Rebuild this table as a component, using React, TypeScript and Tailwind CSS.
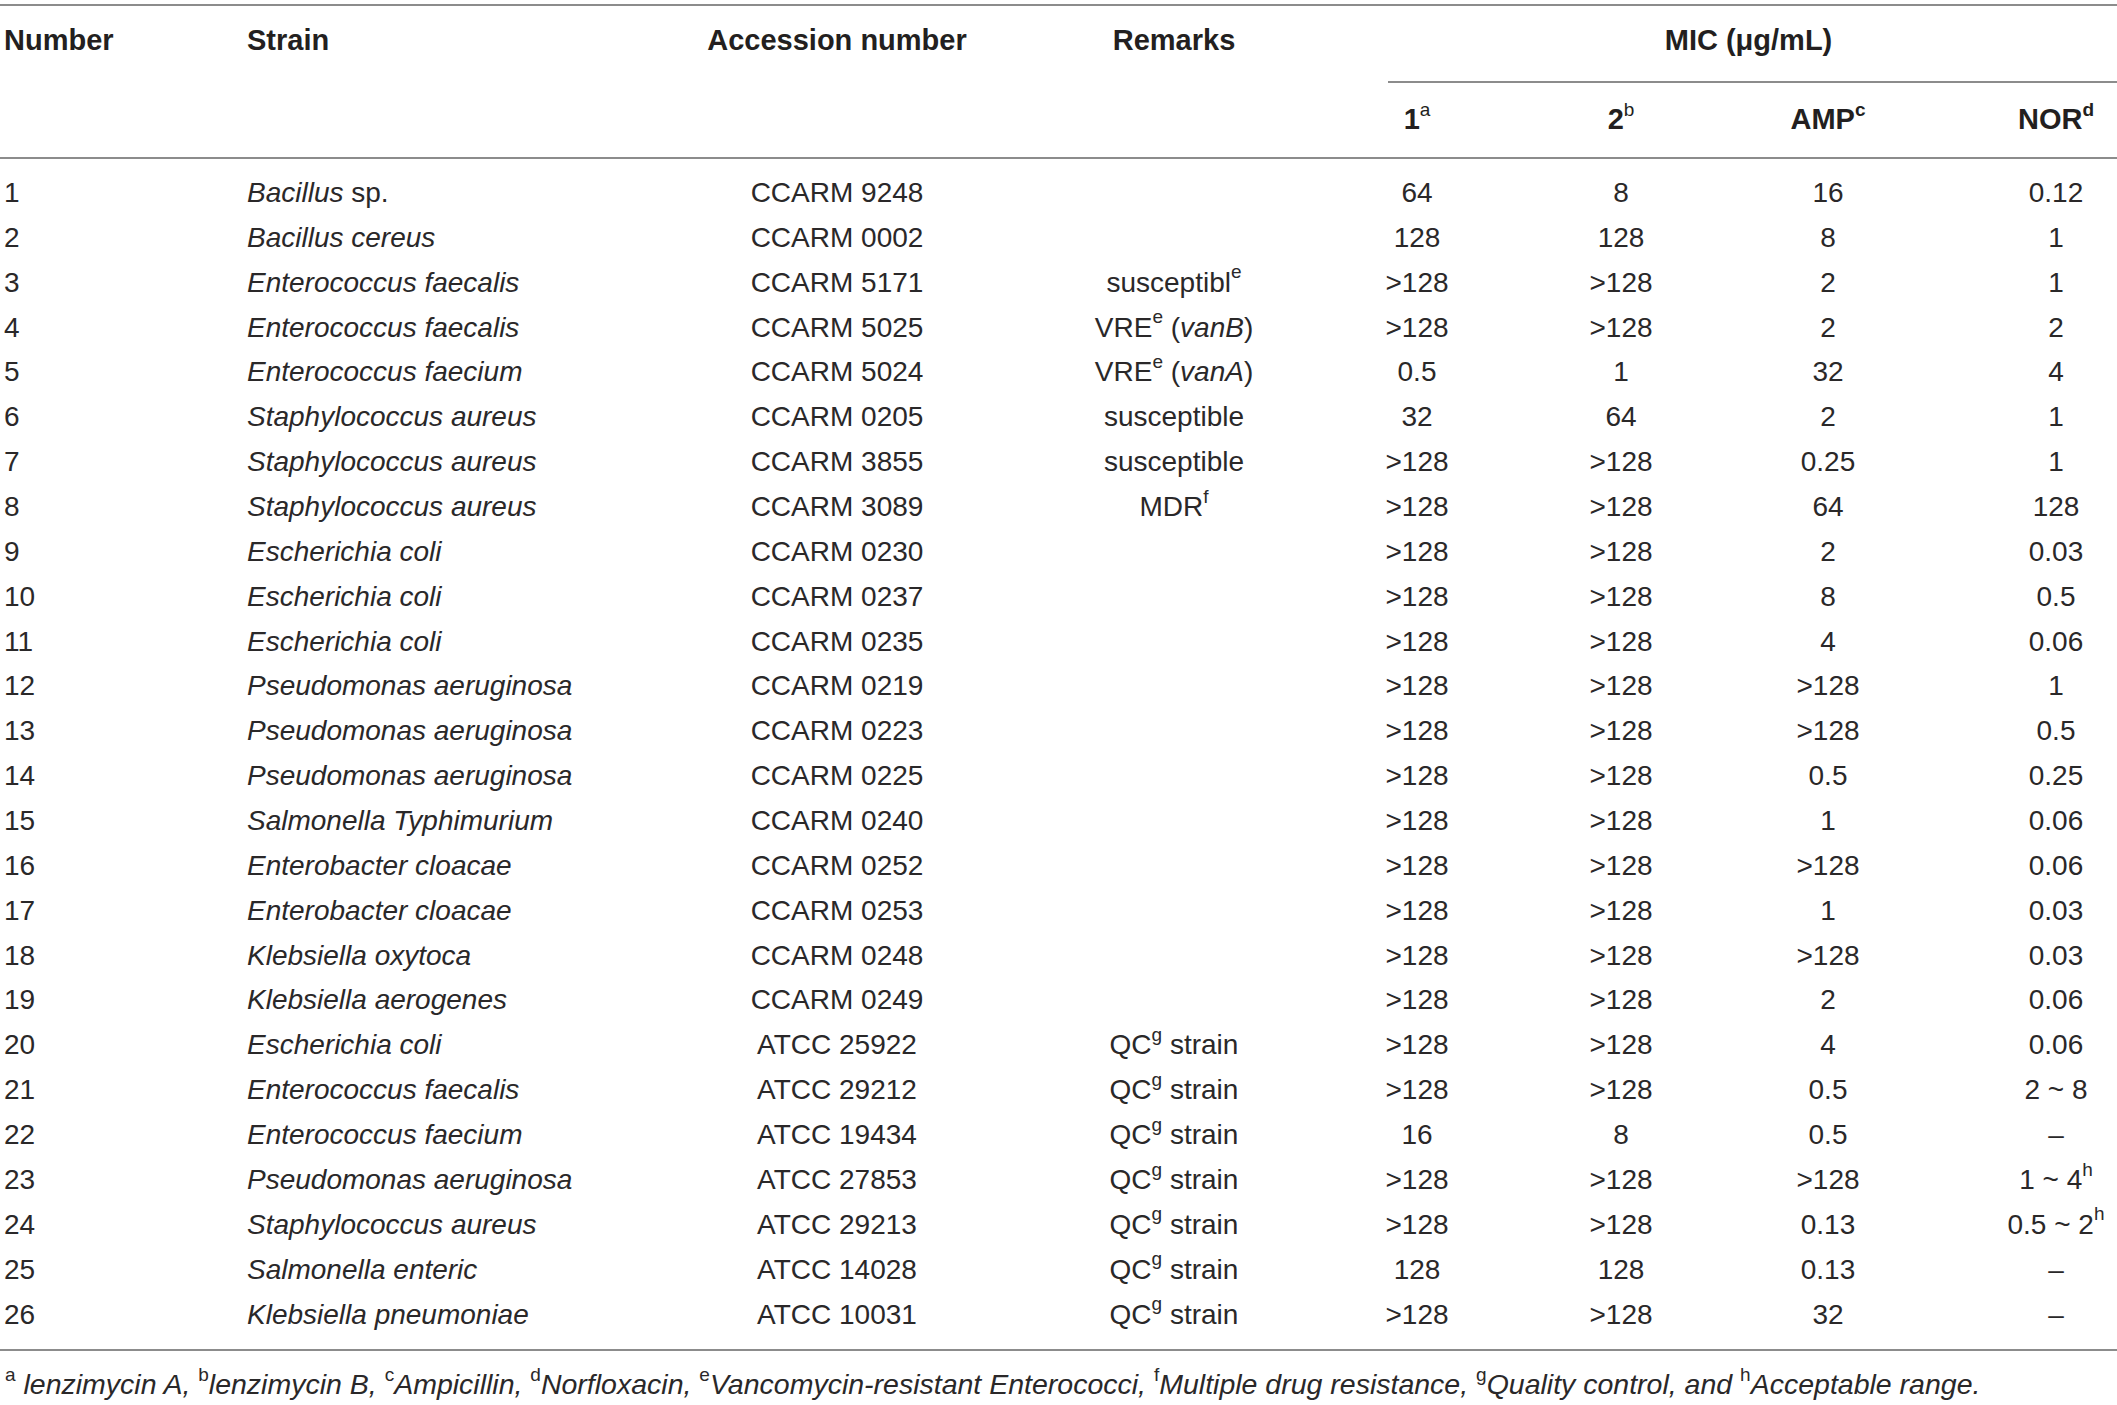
import React from "react";

type Row = {
  n: number;
  strain: React.ReactNode;
  acc: string;
  rem?: React.ReactNode;
  v: React.ReactNode[];
};

const Sup = ({ children, bold }: { children: React.ReactNode; bold?: boolean }) => (
  <sup className={`text-[19px] not-italic top-[-0.7em] ${bold ? "font-bold" : "font-normal"}`}>{children}</sup>
);

const I = ({ children }: { children: React.ReactNode }) => <i>{children}</i>;

const QC = (
  <>
    QC<Sup>g</Sup> strain
  </>
);
const G = ">128";

const rows: Row[] = [
  { n: 1, strain: <><I>Bacillus</I> sp.</>, acc: "CCARM 9248", v: ["64", "8", "16", "0.12"] },
  { n: 2, strain: <I>Bacillus cereus</I>, acc: "CCARM 0002", v: ["128", "128", "8", "1"] },
  { n: 3, strain: <I>Enterococcus faecalis</I>, acc: "CCARM 5171", rem: <>susceptibl<Sup>e</Sup></>, v: [G, G, "2", "1"] },
  { n: 4, strain: <I>Enterococcus faecalis</I>, acc: "CCARM 5025", rem: <>VRE<Sup>e</Sup> (<I>vanB</I>)</>, v: [G, G, "2", "2"] },
  { n: 5, strain: <I>Enterococcus faecium</I>, acc: "CCARM 5024", rem: <>VRE<Sup>e</Sup> (<I>vanA</I>)</>, v: ["0.5", "1", "32", "4"] },
  { n: 6, strain: <I>Staphylococcus aureus</I>, acc: "CCARM 0205", rem: "susceptible", v: ["32", "64", "2", "1"] },
  { n: 7, strain: <I>Staphylococcus aureus</I>, acc: "CCARM 3855", rem: "susceptible", v: [G, G, "0.25", "1"] },
  { n: 8, strain: <I>Staphylococcus aureus</I>, acc: "CCARM 3089", rem: <>MDR<Sup>f</Sup></>, v: [G, G, "64", "128"] },
  { n: 9, strain: <I>Escherichia coli</I>, acc: "CCARM 0230", v: [G, G, "2", "0.03"] },
  { n: 10, strain: <I>Escherichia coli</I>, acc: "CCARM 0237", v: [G, G, "8", "0.5"] },
  { n: 11, strain: <I>Escherichia coli</I>, acc: "CCARM 0235", v: [G, G, "4", "0.06"] },
  { n: 12, strain: <I>Pseudomonas aeruginosa</I>, acc: "CCARM 0219", v: [G, G, G, "1"] },
  { n: 13, strain: <I>Pseudomonas aeruginosa</I>, acc: "CCARM 0223", v: [G, G, G, "0.5"] },
  { n: 14, strain: <I>Pseudomonas aeruginosa</I>, acc: "CCARM 0225", v: [G, G, "0.5", "0.25"] },
  { n: 15, strain: <I>Salmonella Typhimurium</I>, acc: "CCARM 0240", v: [G, G, "1", "0.06"] },
  { n: 16, strain: <I>Enterobacter cloacae</I>, acc: "CCARM 0252", v: [G, G, G, "0.06"] },
  { n: 17, strain: <I>Enterobacter cloacae</I>, acc: "CCARM 0253", v: [G, G, "1", "0.03"] },
  { n: 18, strain: <I>Klebsiella oxytoca</I>, acc: "CCARM 0248", v: [G, G, G, "0.03"] },
  { n: 19, strain: <I>Klebsiella aerogenes</I>, acc: "CCARM 0249", v: [G, G, "2", "0.06"] },
  { n: 20, strain: <I>Escherichia coli</I>, acc: "ATCC 25922", rem: QC, v: [G, G, "4", "0.06"] },
  { n: 21, strain: <I>Enterococcus faecalis</I>, acc: "ATCC 29212", rem: QC, v: [G, G, "0.5", "2 ~ 8"] },
  { n: 22, strain: <I>Enterococcus faecium</I>, acc: "ATCC 19434", rem: QC, v: ["16", "8", "0.5", "–"] },
  { n: 23, strain: <I>Pseudomonas aeruginosa</I>, acc: "ATCC 27853", rem: QC, v: [G, G, G, <>1 ~ 4<Sup>h</Sup></>] },
  { n: 24, strain: <I>Staphylococcus aureus</I>, acc: "ATCC 29213", rem: QC, v: [G, G, "0.13", <>0.5 ~ 2<Sup>h</Sup></>] },
  { n: 25, strain: <I>Salmonella enteric</I>, acc: "ATCC 14028", rem: QC, v: ["128", "128", "0.13", "–"] },
  { n: 26, strain: <I>Klebsiella pneumoniae</I>, acc: "ATCC 10031", rem: QC, v: [G, G, "32", "–"] },
];

const COLS = "grid grid-cols-[247px_332px_516px_158px_328px_80px_334px_122px]";
const C = "flex justify-center whitespace-nowrap";

export default function App() {
  return (
    <div className="w-[2117px] h-[1405px] bg-white text-[#2a2829] font-['Liberation_Sans',Arial,sans-serif] text-[28px] overflow-hidden">
      <div className="h-[4px]" />
      <div className="h-[2px] bg-[#8c8c8c]" />
      {/* header */}
      <div className={`${COLS} font-bold text-[29px] leading-[34px] text-[#231f20]`}>
        <div className="pt-[17px] pl-[4px] h-[77px]">Number</div>
        <div className="pt-[17px]">Strain</div>
        <div className={`${C} pt-[17px]`}>
          <span>Accession number</span>
        </div>
        <div className={`${C} pt-[17px]`}>
          <span>Remarks</span>
        </div>
        <div className="col-span-4 pl-[135px]">
          <div className="h-[77px] pt-[17px] pr-[8px] border-b-2 border-[#8c8c8c] flex justify-center">
            <span>MIC (μg/mL)</span>
          </div>
        </div>
        <div className="h-[74px]" />
        <div />
        <div />
        <div />
        <div className={`${C} pt-[19px]`}>
          <span>
            1<Sup>a</Sup>
          </span>
        </div>
        <div className={`${C} pt-[19px]`}>
          <span>
            2<Sup>b</Sup>
          </span>
        </div>
        <div className={`${C} pt-[19px]`}>
          <span>
            AMP<Sup bold>c</Sup>
          </span>
        </div>
        <div className={`${C} pt-[19px]`}>
          <span>
            NOR<Sup bold>d</Sup>
          </span>
        </div>
      </div>
      <div className="h-[2px] bg-[#8c8c8c]" />
      {/* body */}
      <div className="pt-[11.6px] pb-[12px]">
        {rows.map((r) => (
          <div key={r.n} className={`${COLS} h-[44.87px] items-center leading-[34px]`}>
            <div className="pl-[4px]">{r.n}</div>
            <div className="whitespace-nowrap">{r.strain}</div>
            <div className={C}>
              <span>{r.acc}</span>
            </div>
            <div className={C}>
              <span>{r.rem}</span>
            </div>
            {r.v.map((x, i) => (
              <div key={i} className={C}>
                <span>{x}</span>
              </div>
            ))}
          </div>
        ))}
      </div>
      <div className="h-[2px] bg-[#8c8c8c]" />
      <div className="pt-[16px] pl-[5px] leading-[34px] italic whitespace-nowrap text-[28.5px]">
        <Sup>a</Sup> lenzimycin A, <Sup>b</Sup>lenzimycin B, <Sup>c</Sup>Ampicillin, <Sup>d</Sup>Norfloxacin,{" "}
        <Sup>e</Sup>Vancomycin-resistant Enterococci, <Sup>f</Sup>Multiple drug resistance, <Sup>g</Sup>Quality
        control, and <Sup>h</Sup>Acceptable range.
      </div>
    </div>
  );
}
